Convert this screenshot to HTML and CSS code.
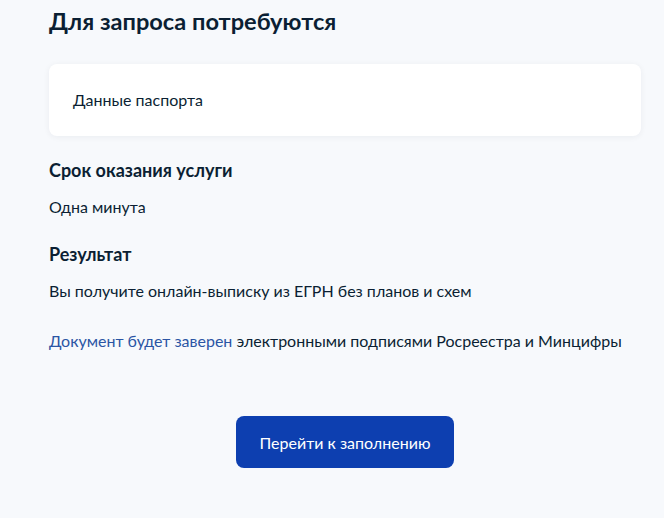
FILE: index.html
```html
<!DOCTYPE html>
<html lang="ru">

<head>
    <meta charset="UTF-8">
    <meta name="viewport" content="width=device-width, initial-scale=1.0">
    <title>Выписка из ЕГРН</title>
    <link rel="stylesheet" href="styles.css">
</head>

<body>
    <div class="page">
        <h2 class="page-title">Для запроса потребуются</h2>
        <div class="card">
            <span class="card-text">Данные паспорта</span>
        </div>
        <div class="section">
            <h3 class="section-title">Срок оказания услуги</h3>
            <p class="section-text">Одна минута</p>
        </div>
        <div class="section">
            <h3 class="section-title">Результат</h3>
            <p class="section-text">Вы получите онлайн-выписку из ЕГРН без планов и схем</p>
        </div>
        <p class="sign-text"><a href="#" class="link">Документ будет заверен</a> электронными подписями Росреестра и Минцифры</p>
        <div class="btn-wrap">
            <button class="btn-primary">Перейти к заполнению</button>
        </div>
    </div>
</body>

</html>
```

FILE: styles.css
```css
* {
    margin: 0;
    padding: 0;
    box-sizing: border-box;
}

body {
    background-color: #f7f9fc;
    font-family: Lato, "Noto Sans", sans-serif;
    color: #0b1f33;
}

.page {
    width: 592px;
    margin-left: 49px;
    padding-top: 6px;
}

.page-title {
    font-size: 23.6px;
    font-weight: 700;
    line-height: 30px;
}

.card {
    margin-top: 28px;
    height: 72px;
    background-color: #fff;
    border-radius: 8px;
    box-shadow: 0 1px 6px rgba(11, 31, 51, 0.06);
    padding: 0 24px 2px;
    display: flex;
    align-items: center;
}

.card-text {
    font-size: 16px;
}

.section {
    margin-top: 22px;
}

.section + .section {
    margin-top: 23px;
}

.section-title {
    font-size: 18px;
    font-weight: 700;
    line-height: 24px;
}

.section-text {
    font-size: 16px;
    line-height: 24px;
    margin-top: 13px;
}

.sign-text {
    font-size: 16px;
    line-height: 24px;
    margin-top: 26px;
}

.link {
    color: #2b55a4;
    text-decoration: none;
}

.btn-wrap {
    display: flex;
    justify-content: center;
    margin-top: 63px;
}

.btn-primary {
    width: 218px;
    height: 52px;
    border: none;
    border-radius: 8px;
    background-color: #0d3fb0;
    color: #fff;
    font-family: Lato, "Noto Sans", sans-serif;
    font-size: 16px;
}
```
